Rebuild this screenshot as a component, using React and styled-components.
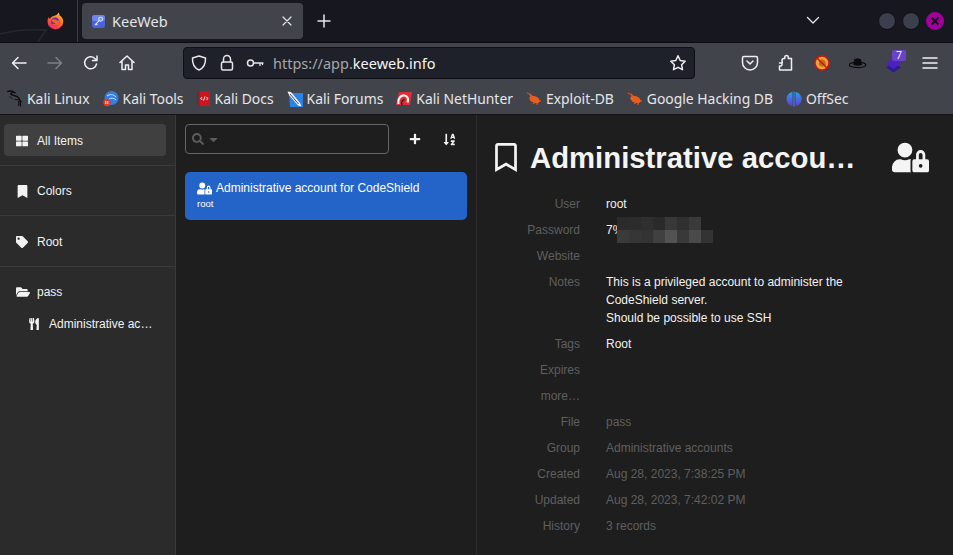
import React from 'react';
import styled, { createGlobalStyle } from 'styled-components';
import {
  FaThLarge, FaBookmark, FaRegBookmark, FaTag, FaFolderOpen, FaUtensils,
  FaUserLock, FaPlus, FaSortAlphaDown, FaSearch, FaCaretDown,
} from 'react-icons/fa';

const GlobalStyle = createGlobalStyle`
  html, body { margin: 0; padding: 0; height: 100%; background: #1e1e1e; overflow: hidden; }
  #root { height: 100%; }
  * { box-sizing: border-box; }
`;

// --- Browser icons ---

const Line = ({ size = 18, children, ...rest }) => (
  <svg width={size} height={size} viewBox="0 0 18 18" fill="none" stroke="currentColor"
    strokeWidth="1.5" strokeLinecap="round" strokeLinejoin="round" {...rest}>
    {children}
  </svg>
);

const FirefoxLogo = () => (
  <svg width="17" height="18" viewBox="0 0 17 18">
    <defs>
      <linearGradient id="ffo" x1="0.8" y1="0" x2="0.3" y2="1">
        <stop offset="0" stopColor="#ffbd2e" />
        <stop offset="0.5" stopColor="#ff6a2b" />
        <stop offset="1" stopColor="#f0246a" />
      </linearGradient>
    </defs>
    <path d="M11.5 0.5c1 1.400 1 2 1 2.800 2.300 1.600 3.800 3.700 3.800 6.200a7.900 7.900 0 1 1-15.800 0c0-1.800.5-3.300 1.500-4.500 0 1 .4 1.500 1 1.800.8-1.600 2-2.500 3.800-2.800 1.800-.4 3.600-1.400 4.700-3.500z" fill="url(#ffo)" />
    <circle cx="8.300" cy="9.800" r="4.300" fill="#6b2fc0" />
    <path d="M4.500 8c2-1.500 4-.8 5 .2 1.200-.2 2.800.2 3.300 1.500-.5 2.500-2.300 4-4.500 4-1.500 0-2.800-.7-3.500-2 1.500.8 3 .5 3.800-.5-1.800 0-3.500-1.300-4.100-3.200z" fill="#f2612c" />
  </svg>
);

const KeeFavicon = () => (
  <svg width="13" height="13" viewBox="0 0 13 13">
    <rect width="13" height="13" rx="2.500" fill="#4a63d8" />
    <rect width="13" height="6" rx="2.500" fill="#6d86ec" />
    <circle cx="8.600" cy="4.200" r="1.900" fill="none" stroke="#dfe6ff" strokeWidth="1.100" />
    <path d="M7.200 5.700L3 10M4.200 8.800l1.200 1.200" stroke="#dfe6ff" strokeWidth="1.100" fill="none" />
  </svg>
);

const KaliDragon = () => (
  <svg width="16" height="17" viewBox="0 0 16 17" fill="none" stroke="#0b0b0d" strokeWidth="1.300" strokeLinecap="round">
    <path d="M0.500 1.500c3-.9 5.500-.4 7 1-1.800-.2-3.300.3-3.800 1.300 1.700 2.200 6 1.500 8 4 1.300 1.600 1.700 4 1.800 8" />
    <path d="M8 9.500c2.300 0 5 .2 7 2.500M11.500 11.500c.3 1.200.4 2.500.2 4" strokeWidth="1" />
    <path d="M3 6.500c.5 1 1.200 1.600 2 2" strokeWidth="0.800" />
  </svg>
);

const KaliTools = () => (
  <svg width="16" height="16" viewBox="0 0 16 16">
    <circle cx="8.500" cy="7" r="7" fill="#2f7fe6" />
    <path d="M4 5c2.500-2 6-2 9 1M6 8c2-1.500 5-1 7 1" stroke="#cfe4ff" strokeWidth="1" fill="none" />
    <circle cx="4" cy="11.500" r="3.700" fill="#e8392b" />
    <path d="M2.800 10v3M4.800 10v3" stroke="#fff" strokeWidth="0.900" />
  </svg>
);

const KaliDocs = () => (
  <svg width="14" height="16" viewBox="0 0 14 16">
    <rect x="0" y="0" width="13" height="15" rx="1" fill="#c9161d" />
    <rect x="0" y="0" width="2.500" height="16" fill="#6f2b34" />
    <path d="M5 6L3.800 7.500 5 9M9.500 6l1.200 1.500L9.500 9M8 5.500L6.500 9.500" stroke="#fff" strokeWidth="1" fill="none" />
  </svg>
);

const KaliForums = () => (
  <svg width="16" height="16" viewBox="0 0 16 16">
    <path d="M2 2h14v14H3z" fill="#2d82e8" />
    <path d="M0.500 0.500L4 1l9 11 1.500 3.500L11 14.500 2 4z" fill="#f2f4f7" />
    <path d="M3 3l8.500 10" stroke="#1c1c22" strokeWidth="0.800" />
  </svg>
);

const KaliNetHunter = () => (
  <svg width="16" height="16" viewBox="0 0 16 16">
    <path d="M3 1h13l-2 13H0z" fill="#e02d35" />
    <path d="M2.500 13c-1-5 2-9 6-8.500 3 .4 4.500 3.500 3 7" stroke="#f5f5f5" strokeWidth="2.200" fill="none" />
    <path d="M6 14c-.8-3 .3-5.500 2.500-5.200" stroke="#1c1c22" strokeWidth="1.300" fill="none" />
  </svg>
);

const ExploitBug = () => (
  <svg width="16" height="14" viewBox="0 0 16 14">
    <ellipse cx="8.500" cy="7.500" rx="5.500" ry="3.300" transform="rotate(25 8.500 7.500)" fill="#ee5c1c" />
    <path d="M1 1c1.500 0 3 1.500 4 3.500M4 1.500l2 2.500M7 12l2-1.500M11 13l.3-2.500M15 9h-3" stroke="#ee5c1c" strokeWidth="1" fill="none" />
  </svg>
);

const OffSecLogo = () => (
  <svg width="16" height="16" viewBox="0 0 16 16">
    <defs>
      <linearGradient id="offs" x1="0" y1="0" x2="0" y2="1">
        <stop offset="0" stopColor="#22a4e8" />
        <stop offset="1" stopColor="#6a38d8" />
      </linearGradient>
    </defs>
    <path d="M6.500 1C3 1.500.5 4.500.5 8s2.500 6.500 6 7z" fill="url(#offs)" />
    <path d="M9.500 1c3.500.5 6 3.500 6 7s-2.500 6.500-6 7z" fill="url(#offs)" />
    <rect x="7.400" y="0.500" width="1.200" height="15" fill="#3f7fe0" />
  </svg>
);

const AdblockBug = () => (
  <svg width="16" height="16" viewBox="0 0 16 16">
    <circle cx="8" cy="8" r="7.200" fill="#eda038" />
    <path d="M5 6l3-2 3 2 1 4-4 2-3-2z" fill="#c06a1c" />
    <circle cx="8" cy="8" r="7" fill="none" stroke="#c9140f" strokeWidth="1.400" />
    <path d="M3 3l10 10" stroke="#c9140f" strokeWidth="1.400" />
  </svg>
);

const FedoraHat = () => (
  <svg width="18" height="12" viewBox="0 0 18 12">
    <ellipse cx="8.500" cy="8" rx="8.300" ry="2.600" fill="none" stroke="#0a0a0c" strokeWidth="1.100" />
    <path d="M4.500 8L5 2.500C6.500 1 11 1 12 2.500L13 8c-2.500 1-6 1-8.500 0z" fill="#0a0a0c" />
  </svg>
);

const StackBadge = () => (
  <svg width="24" height="24" viewBox="0 0 24 24">
    <path d="M11.500 11.500l7.500 5-7.500 5-7.500-5z" fill="#2d1c8c" />
    <path d="M11.500 7l7.500 5.500-7.500 5.500L4 12.500z" fill="#4a22c4" />
  </svg>
);

// --- Data ---

const bookmarks = [
  { label: 'Kali Linux', Icon: KaliDragon },
  { label: 'Kali Tools', Icon: KaliTools },
  { label: 'Kali Docs', Icon: KaliDocs },
  { label: 'Kali Forums', Icon: KaliForums },
  { label: 'Kali NetHunter', Icon: KaliNetHunter },
  { label: 'Exploit-DB', Icon: ExploitBug },
  { label: 'Google Hacking DB', Icon: ExploitBug },
  { label: 'OffSec', Icon: OffSecLogo },
];

// mosaic over the password, two rows of grey blocks
const mosaic = [
  ['#2b2b2b', '#2c2c2c', '#2f2f2f', '#2a2a2a', '#383838', '#303030', '#3a3a3a'],
  ['#3a3a3a', '#363636', '#333333', '#404040', '#525252', '#393939', '#4a4a4a', '#333333'],
];

const fields = [
  { label: 'User', value: 'root' },
  { label: 'Password', password: true },
  { label: 'Website' },
  { label: 'Notes', lines: ['This is a privileged account to administer the', 'CodeShield server.', 'Should be possible to use SSH'] },
  { label: 'Tags', value: 'Root' },
  { label: 'Expires' },
  { label: 'more…' },
  { label: 'File', value: 'pass', dim: true },
  { label: 'Group', value: 'Administrative accounts', dim: true },
  { label: 'Created', value: 'Aug 28, 2023, 7:38:25 PM', dim: true },
  { label: 'Updated', value: 'Aug 28, 2023, 7:42:02 PM', dim: true },
  { label: 'History', value: '3 records', dim: true },
];

const App = () => (
  <Page>
    <GlobalStyle />
    <TabStrip>
      <Wallpaper width="78" height="42" viewBox="0 0 78 42" fill="none">
        <path d="M0 34C14 30 30 29 46 30L38 42" stroke="#26272d" strokeWidth="1.500" />
      </Wallpaper>
      <LogoSlot><FirefoxLogo /></LogoSlot>
      <Tab>
        <KeeFavicon />
        <TabTitle>KeeWeb</TabTitle>
        <Line size={12} viewBox="0 0 12 12" strokeWidth="1.200"><path d="M2 2l8 8M10 2l-8 8" /></Line>
      </Tab>
      <NewTab>
        <Line size={16} viewBox="0 0 16 16"><path d="M8 2v12M2 8h12" /></Line>
      </NewTab>
      <TabListButton>
        <Line size={14} viewBox="0 0 14 14" strokeWidth="1.300"><path d="M1.500 4.500L7 10l5.500-5.500" /></Line>
      </TabListButton>
      <WindowButtons>
        <WindowDot />
        <WindowDot />
        <WindowDot $close>
          <svg width="10" height="10" viewBox="0 0 10 10"><path d="M1.500 1.500l7 7M8.500 1.500l-7 7" stroke="#120014" strokeWidth="2" /></svg>
        </WindowDot>
      </WindowButtons>
    </TabStrip>

    <NavBar>
      <NavButton>
        <Line><path d="M16 9H3M8 3.500L2.500 9 8 14.500" /></Line>
      </NavButton>
      <NavButton $disabled>
        <Line><path d="M2 9h13M10 3.500L15.500 9 10 14.500" /></Line>
      </NavButton>
      <NavButton>
        <Line><path d="M14.500 10a6 6 0 1 1-1.700-5.500L15 6.500M15 2v4.500h-4.500" /></Line>
      </NavButton>
      <NavButton>
        <Line><path d="M2 8.500L9 2l7 6.500M4 7v8.500h3.500V11h3v4.500H14V7" /></Line>
      </NavButton>
      <UrlBar>
        <UrlIcon>
          <Line><path d="M9 2l6.500 2c.3 6-1.700 10-6.500 12C4.200 14 2.200 10 2.500 4z" /></Line>
        </UrlIcon>
        <UrlIcon>
          <Line><rect x="3.500" y="8" width="11" height="8" rx="1.500" /><path d="M5.500 8V5a3.500 3.500 0 0 1 7 0v3" /></Line>
        </UrlIcon>
        <UrlIcon>
          <Line><circle cx="4.500" cy="9" r="3" /><path d="M7.500 9H17M14 9v2.500M16.500 9v1.500" strokeWidth="1.300" /></Line>
        </UrlIcon>
        <UrlText>https://app.<strong>keeweb.info</strong></UrlText>
        <StarSlot>
          <Line><path d="M9 1.800l2.200 4.700 5 .7-3.600 3.500.9 5L9 13.300l-4.500 2.400.9-5L1.800 7.200l5-.7z" /></Line>
        </StarSlot>
      </UrlBar>
      <NavActions>
        <NavButton>
          <Line><path d="M3 2.500h12c1 0 1.500.6 1.500 1.500v4.500a7.500 7.500 0 0 1-15 0V4c0-.9.500-1.500 1.500-1.500z" /><path d="M6 7l3 3 3-3" /></Line>
        </NavButton>
        <NavButton>
          <Line><path d="M2.500 9h2.700c.3-1-.2-1.300-.2-2.500C5 5 6 4.500 7 4.500h.8V2.800A1.800 1.800 0 0 1 11.300 3v1.500h3.200V16H3c-.4 0-.5-.2-.5-.5V12c1.500.3 2.500-.2 2.500-1.500S4 8.800 2.500 9z" /></Line>
        </NavButton>
        <NavButton><AdblockBug /></NavButton>
        <NavButton><FedoraHat /></NavButton>
        <NavButton>
          <StackBadge />
          <CountBadge>7</CountBadge>
        </NavButton>
        <NavButton>
          <Line><path d="M2 4h14M2 9h14M2 14h14" /></Line>
        </NavButton>
      </NavActions>
    </NavBar>

    <BookmarkBar>
      {bookmarks.map(({ label, Icon }) => (
        <Bookmark key={label}>
          <BookmarkIcon><Icon /></BookmarkIcon>
          {label}
        </Bookmark>
      ))}
    </BookmarkBar>

    <AppBody>
      <Sidebar>
        <MenuSection>
          <MenuItem $active><FaThLarge size={12} /><span>All Items</span></MenuItem>
        </MenuSection>
        <MenuSection>
          <MenuItem><FaBookmark size={13} /><span>Colors</span></MenuItem>
        </MenuSection>
        <MenuSection>
          <MenuItem><FaTag size={12} /><span>Root</span></MenuItem>
        </MenuSection>
        <MenuSection $last>
          <MenuItem><FaFolderOpen size={14} /><span>pass</span></MenuItem>
          <SubItem><FaUtensils size={12} /><SubLabel>Administrative account for CodeShield</SubLabel></SubItem>
        </MenuSection>
      </Sidebar>

      <ListPane>
        <ListHeader>
          <SearchBox>
            <FaSearch size={12} />
            <FaCaretDown size={13} />
          </SearchBox>
          <HeaderButton><FaPlus size={12} /></HeaderButton>
          <HeaderButton><FaSortAlphaDown size={13} /></HeaderButton>
        </ListHeader>
        <EntryCard>
          <EntryTitle><FaUserLock size={15} />Administrative account for CodeShield</EntryTitle>
          <EntryUser>root</EntryUser>
        </EntryCard>
      </ListPane>

      <DetailPane>
        <DetailHeader>
          <BookmarkGlyph><FaRegBookmark size={29} /></BookmarkGlyph>
          <DetailTitle>Administrative account for CodeShield</DetailTitle>
          <FaUserLock size={37} />
        </DetailHeader>
        <FieldList>
          {fields.map(({ label, value, lines, password, dim }) => (
            <Field key={label}>
              <FieldLabel>{label}</FieldLabel>
              <FieldValue $dim={dim}>
                {value}
                {lines && lines.map((line) => <div key={line}>{line}</div>)}
                {password && (
                  <PasswordRow>
                    7%
                    <Mosaic width="96" height="26" viewBox="0 0 96 26">
                      {mosaic.map((row, y) => row.map((fill, x) => (
                        <rect key={`${x}-${y}`} x={x * 12} y={y * 13} width="12" height="13" fill={fill} />
                      )))}
                    </Mosaic>
                  </PasswordRow>
                )}
              </FieldValue>
            </Field>
          ))}
        </FieldList>
      </DetailPane>
    </AppBody>
  </Page>
);

// --- Styled Components ---

const Page = styled.div`
  display: flex;
  flex-direction: column;
  height: 100vh;
  overflow: hidden;
`;

const TabStrip = styled.div`
  position: relative;
  flex: 0 0 43px;
  display: flex;
  align-items: flex-start;
  background: #17181f;
  border-bottom: 1px solid #0c0c10;
  color: #e8e8ea;
  font-family: "Noto Sans", sans-serif;
`;

const Wallpaper = styled.svg`
  position: absolute;
  left: 0;
  top: 0;
`;

const LogoSlot = styled.div`
  position: relative;
  width: 78px;
  height: 42px;
  padding: 12px 0 0 47px;
  border-right: 1px solid #3a3b42;
`;

const Tab = styled.div`
  width: 221px;
  height: 36px;
  margin: 3px 0 0 4px;
  padding: 0 10px 0 10px;
  display: flex;
  align-items: center;
  background: #42444c;
  border-radius: 4px;
  color: #e4e4e6;
`;

const TabTitle = styled.span`
  flex: 1;
  margin-left: 7px;
  font-size: 14.500px;
`;

const NewTab = styled.div`
  width: 42px;
  height: 42px;
  display: flex;
  align-items: center;
  justify-content: center;
  margin-left: 0;
`;

const TabListButton = styled.div`
  margin-left: 461px;
  height: 40px;
  display: flex;
  align-items: center;
`;

const WindowButtons = styled.div`
  margin-left: 58px;
  padding-top: 12px;
  display: flex;
  gap: 6px;
`;

const WindowDot = styled.div`
  width: 18px;
  height: 18px;
  border-radius: 50%;
  display: flex;
  align-items: center;
  justify-content: center;
  background: ${(p) => (p.$close ? '#a1009c' : '#3a3e4d')};
  border: 1px solid ${(p) => (p.$close ? '#a1009c' : '#0e0f13')};
`;

const NavBar = styled.div`
  flex: 0 0 41px;
  display: flex;
  align-items: center;
  padding: 0 0 1px 1px;
  background: #42444c;
  color: #f0f0f2;
`;

const NavButton = styled.div`
  position: relative;
  width: 36px;
  height: 36px;
  flex: none;
  display: flex;
  align-items: center;
  justify-content: center;
  color: ${(p) => (p.$disabled ? '#7f8086' : 'inherit')};
`;

const UrlBar = styled.div`
  width: 512px;
  height: 32px;
  margin-left: 38px;
  padding: 0 7px 0 1px;
  display: flex;
  align-items: center;
  background: #1f212a;
  border: 1px solid #101116;
  border-radius: 4px;
`;

const UrlIcon = styled.div`
  width: 28px;
  flex: none;
  display: flex;
  justify-content: center;
  color: #e6e6e8;
`;

const UrlText = styled.div`
  flex: 1;
  margin-left: 4px;
  font: 14.500px "Noto Sans", sans-serif;
  color: #a5a6aa;

  strong {
    font-weight: 400;
    color: #f4f4f5;
  }
`;

const StarSlot = styled.div`
  display: flex;
  color: #eeeeef;
`;

const NavActions = styled.div`
  margin-left: 37px;
  display: flex;
`;

const CountBadge = styled.span`
  position: absolute;
  top: 5px;
  right: 6px;
  width: 14px;
  height: 11px;
  border-radius: 2px;
  background: #6a44c8;
  color: #f0ecff;
  font: 10.500px/11px "Noto Sans", sans-serif;
  text-align: center;
`;

const BookmarkBar = styled.div`
  flex: 0 0 31px;
  display: flex;
  align-items: center;
  gap: 13px;
  padding: 0 0 1px 7px;
  background: #42444c;
  border-bottom: 1px solid #131318;
  font: 13.900px "Noto Sans", sans-serif;
  color: #e6e6e8;
  white-space: nowrap;
`;

const Bookmark = styled.div`
  display: flex;
  align-items: center;
  gap: 4px;
`;

const BookmarkIcon = styled.span`
  display: flex;
`;

const AppBody = styled.div`
  flex: 1;
  min-height: 0;
  display: flex;
  font-family: "Liberation Sans", Arial, sans-serif;
  font-size: 12px;
  color: #f2f2f2;
  background: #1e1e1e;
`;

const Sidebar = styled.nav`
  flex: 0 0 176px;
  min-width: 0;
  background: #2b2b2b;
  border-right: 1px solid #3a3a3a;
`;

const MenuSection = styled.div`
  height: ${(p) => (p.$last ? 'auto' : '50.500px')};
  padding: 9px 9px 0 4px;
  border-bottom: ${(p) => (p.$last ? 'none' : '1px solid #3c3c3c')};
`;

const MenuItem = styled.div`
  height: 32px;
  display: grid;
  grid-template-columns: 21px 1fr;
  align-items: center;
  padding: 1px 0 0 12px;
  border-radius: 4px;
  background: ${(p) => (p.$active ? '#404040' : 'transparent')};
`;

const SubItem = styled.div`
  height: 30px;
  margin-top: 1px;
  display: grid;
  grid-template-columns: 21px 1fr;
  align-items: center;
  padding: 0 12px 0 24px;
`;

const SubLabel = styled.span`
  overflow: hidden;
  white-space: nowrap;
  text-overflow: ellipsis;
`;

const ListPane = styled.section`
  flex: 0 0 301px;
  min-width: 0;
  padding: 9px 9px 0 9px;
  border-right: 1px solid #2d2d2d;
`;

const ListHeader = styled.div`
  display: flex;
  align-items: center;
`;

const SearchBox = styled.div`
  width: 205px;
  height: 30px;
  margin-right: 8px;
  padding-left: 6px;
  display: flex;
  align-items: center;
  gap: 3px;
  border: 1px solid #666666;
  border-radius: 4px;
  color: #5c5c5c;
`;

const HeaderButton = styled.div`
  width: 35px;
  display: flex;
  justify-content: center;
  color: #f2f2f2;
`;

const EntryCard = styled.div`
  height: 48px;
  margin-top: 18px;
  padding: 8px 12px 0;
  border-radius: 5px;
  background: #2464c8;
  color: #ffffff;
`;

const EntryTitle = styled.div`
  display: flex;
  align-items: center;
  gap: 4px;
  line-height: 16px;
`;

const EntryUser = styled.div`
  margin-top: 1px;
  font-size: 9.500px;
  line-height: 14px;
`;

const DetailPane = styled.section`
  flex: 1;
  min-width: 0;
  padding: 28px 24px 0 18px;
`;

const DetailHeader = styled.header`
  display: flex;
  align-items: center;
  height: 29px;
  color: #f4f4f4;
`;

const BookmarkGlyph = styled.span`
  flex: none;
  width: 22px;
  display: flex;
  justify-content: center;
`;

const DetailTitle = styled.h1`
  flex: 1;
  min-width: 0;
  margin: 0 34px 0 13px;
  font-size: 29.300px;
  font-weight: 700;
  line-height: 34px;
  overflow: hidden;
  white-space: nowrap;
  text-overflow: ellipsis;
`;

const FieldList = styled.div`
  margin-top: 23px;
  display: flex;
  flex-direction: column;
  gap: 8px;
`;

const Field = styled.div`
  display: grid;
  grid-template-columns: 85px 1fr;
  column-gap: 26px;
  line-height: 18px;
  min-height: 18px;
`;

const FieldLabel = styled.div`
  text-align: right;
  color: #5f5f5f;
`;

const FieldValue = styled.div`
  color: ${(p) => (p.$dim ? '#5f5f5f' : '#f2f2f2')};
`;

const PasswordRow = styled.div`
  position: relative;
  height: 18px;
`;

const Mosaic = styled.svg`
  position: absolute;
  left: 11px;
  top: -4px;
`;

export default App;
